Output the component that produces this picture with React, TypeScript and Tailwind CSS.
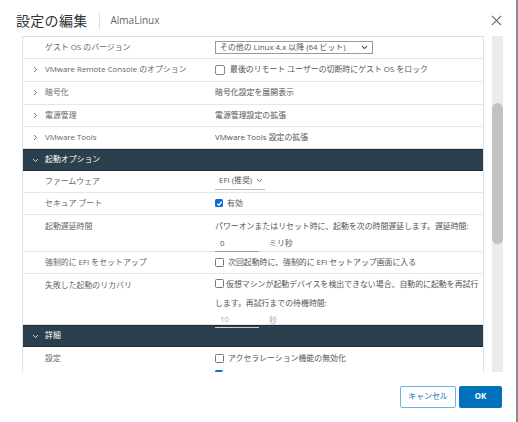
import React from "react";

const font = { fontFamily: '"Open Sans", "Noto Sans CJK JP", sans-serif' };

function Chevron({ open, light }: { open?: boolean; light?: boolean }) {
  return (
    <svg
      width="7"
      height="7"
      viewBox="0 0 10 10"
      className={open ? "rotate-90" : ""}
      fill="none"
      stroke={light ? "#d6dde2" : "#666"}
      strokeWidth="1.4"
    >
      <path d="M3 1.5 L6.5 5 L3 8.5" />
    </svg>
  );
}

function Box({ checked }: { checked?: boolean }) {
  if (checked)
    return (
      <span className="inline-flex w-[8px] h-[8px] rounded-[1.5px] bg-[#0a6ed1] items-center justify-center shrink-0 align-[-1px]">
        <svg width="7" height="7" viewBox="0 0 10 10" fill="none" stroke="white" strokeWidth="2">
          <path d="M2 5.2 L4.2 7.4 L8.2 2.6" />
        </svg>
      </span>
    );
  return <span className="inline-block w-[9px] h-[9px] rounded-[1.5px] border border-[#777] bg-white shrink-0 align-[-1px]" />;
}

function Row({
  label,
  chevron,
  children,
  h = "h-[22px]",
  top,
}: {
  label: string;
  chevron?: boolean;
  children?: React.ReactNode;
  h?: string;
  top?: boolean;
}) {
  return (
    <div className={`flex border-b border-[#e6e6e6] ${h} ${top ? "items-start" : "items-center"}`}>
      <div className={`w-[192px] flex items-center shrink-0 ${top ? "pt-[6px]" : ""}`}>
        <div className="w-[22px] flex justify-end pr-[6px]">{chevron && <Chevron />}</div>
        <span className="text-[7.9px] text-[#666]">{label}</span>
      </div>
      <div className={`flex-1 text-[7.9px] text-[#555] ${top ? "pt-[6px]" : ""}`}>{children}</div>
    </div>
  );
}

function Section({ title }: { title: string }) {
  return (
    <div className="flex items-center h-[22px] bg-[#2b3f4d] border-y border-[#1f2d37]">
      <div className="w-[22px] flex justify-end pr-[6px]">
        <Chevron open light />
      </div>
      <span className="text-[7.9px] text-white">{title}</span>
    </div>
  );
}

export default function App() {
  return (
    <div style={font} className="w-[518px] h-[422px] bg-white border-r-2 border-[#8c8c8c] flex flex-col overflow-hidden">
      {/* header */}
      <div className="flex items-center h-[36px] pl-[16px] pr-[14px] pt-[5px]">
        <span className="text-[14px] text-[#333] tracking-[0.3px]">設定の編集</span>
        <span className="w-px h-[16px] bg-[#ddd] ml-[11px] mr-[11px]" />
        <span className="text-[10px] text-[#666]">AlmaLinux</span>
        <span className="ml-auto">
          <svg width="11" height="11" viewBox="0 0 12 12" stroke="#666" strokeWidth="1.2">
            <path d="M1 1 L11 11 M11 1 L1 11" />
          </svg>
        </span>
      </div>

      {/* body */}
      <div className="flex h-[336px] pl-[22px]">
        <div className="w-[462px] border-x border-t border-[#e0e0e0] overflow-hidden">
          <Row label="ゲスト OS のバージョン">
            <div className="w-[158px] h-[13px] border border-[#999] flex items-center px-[4px] text-[7.9px] text-[#555]">
              <span>その他の Linux 4.x 以降 (64 ビット)</span>
              <svg className="ml-auto" width="7" height="5" viewBox="0 0 10 6" fill="none" stroke="#444" strokeWidth="1.5">
                <path d="M1.5 1 L5 4.5 L8.5 1" />
              </svg>
            </div>
          </Row>
          <Row label="VMware Remote Console のオプション" chevron h="h-[23px]">
            <div className="flex items-center gap-[5px]">
              <span className="inline-block w-[10px] h-[10px] rounded-[2px] border border-[#888] bg-white" />
              <span>最後のリモート ユーザーの切断時にゲスト OS をロック</span>
            </div>
          </Row>
          <Row label="暗号化" chevron h="h-[23px]">
            暗号化設定を展開表示
          </Row>
          <Row label="電源管理" chevron>
            電源管理設定の拡張
          </Row>
          <Row label="VMware Tools" chevron>
            VMware Tools 設定の拡張
          </Row>
          <Section title="起動オプション" />
          <Row label="ファームウェア">
            <div className="inline-flex items-center gap-[4px] border-b border-[#bbb] pl-[4px] pr-[2px] pb-[2px] pt-[2px]">
              <span>EFI (推奨)</span>
              <svg width="7" height="5" viewBox="0 0 10 6" fill="none" stroke="#555" strokeWidth="1.2">
                <path d="M1.5 1 L5 4.5 L8.5 1" />
              </svg>
            </div>
          </Row>
          <Row label="セキュア ブート">
            <div className="flex items-center gap-[4px]">
              <Box checked />
              <span>有効</span>
            </div>
          </Row>
          <Row label="起動遅延時間" h="h-[37px]" top>
            <div>パワーオンまたはリセット時に、起動を次の時間遅延します。遅延時間:</div>
            <div className="flex items-center mt-[4px]">
              <div className="w-[44px] h-[15px] border-b border-[#999] pl-[5px] flex items-center">0</div>
              <span className="ml-[10px]">ミリ秒</span>
            </div>
          </Row>
          <Row label="強制的に EFI をセットアップ">
            <div className="flex items-center gap-[4px]">
              <Box />
              <span>次回起動時に、強制的に EFI セットアップ画面に入る</span>
            </div>
          </Row>
          <Row label="失敗した起動のリカバリ" h="h-[51px]" top>
            <div className="w-[268px] leading-[19px] -mt-[5px]">
              <Box /> 仮想マシンが起動デバイスを検出できない場合、自動的に起動を再試行します。再試行までの待機時間:
            </div>
            <div className="flex items-center">
              <div className="w-[44px] h-[15px] border-b border-[#ccc] pl-[5px] flex items-center text-[#aaa]">10</div>
              <span className="ml-[10px] text-[#aaa]">秒</span>
            </div>
          </Row>
          <Section title="詳細" />
          <Row label="設定" h="h-[40px]" top>
            <div className="flex items-center gap-[4px]">
              <Box />
              <span>アクセラレーション機能の無効化</span>
            </div>
            <div className="flex items-center gap-[4px] mt-[5px]">
              <Box checked />
            </div>
          </Row>
        </div>
        <div className="ml-[8px] w-[11px] bg-[#ececec] relative">
          <div className="absolute left-0 right-0 top-[67px] h-[141px] rounded-full bg-[#c2c2c2]" />
        </div>
      </div>

      {/* footer */}
      <div className="flex justify-end items-start gap-[3px] pr-[14px] pt-[14px]">
        <button className="w-[56px] h-[22px] border border-[#6eb4e0] rounded-[2px] text-[7.9px] text-[#0072c6] bg-white">
          キャンセル
        </button>
        <button className="w-[43px] h-[22px] rounded-[2px] text-[7.9px] font-bold text-white bg-[#0072bc]">
          OK
        </button>
      </div>
    </div>
  );
}
